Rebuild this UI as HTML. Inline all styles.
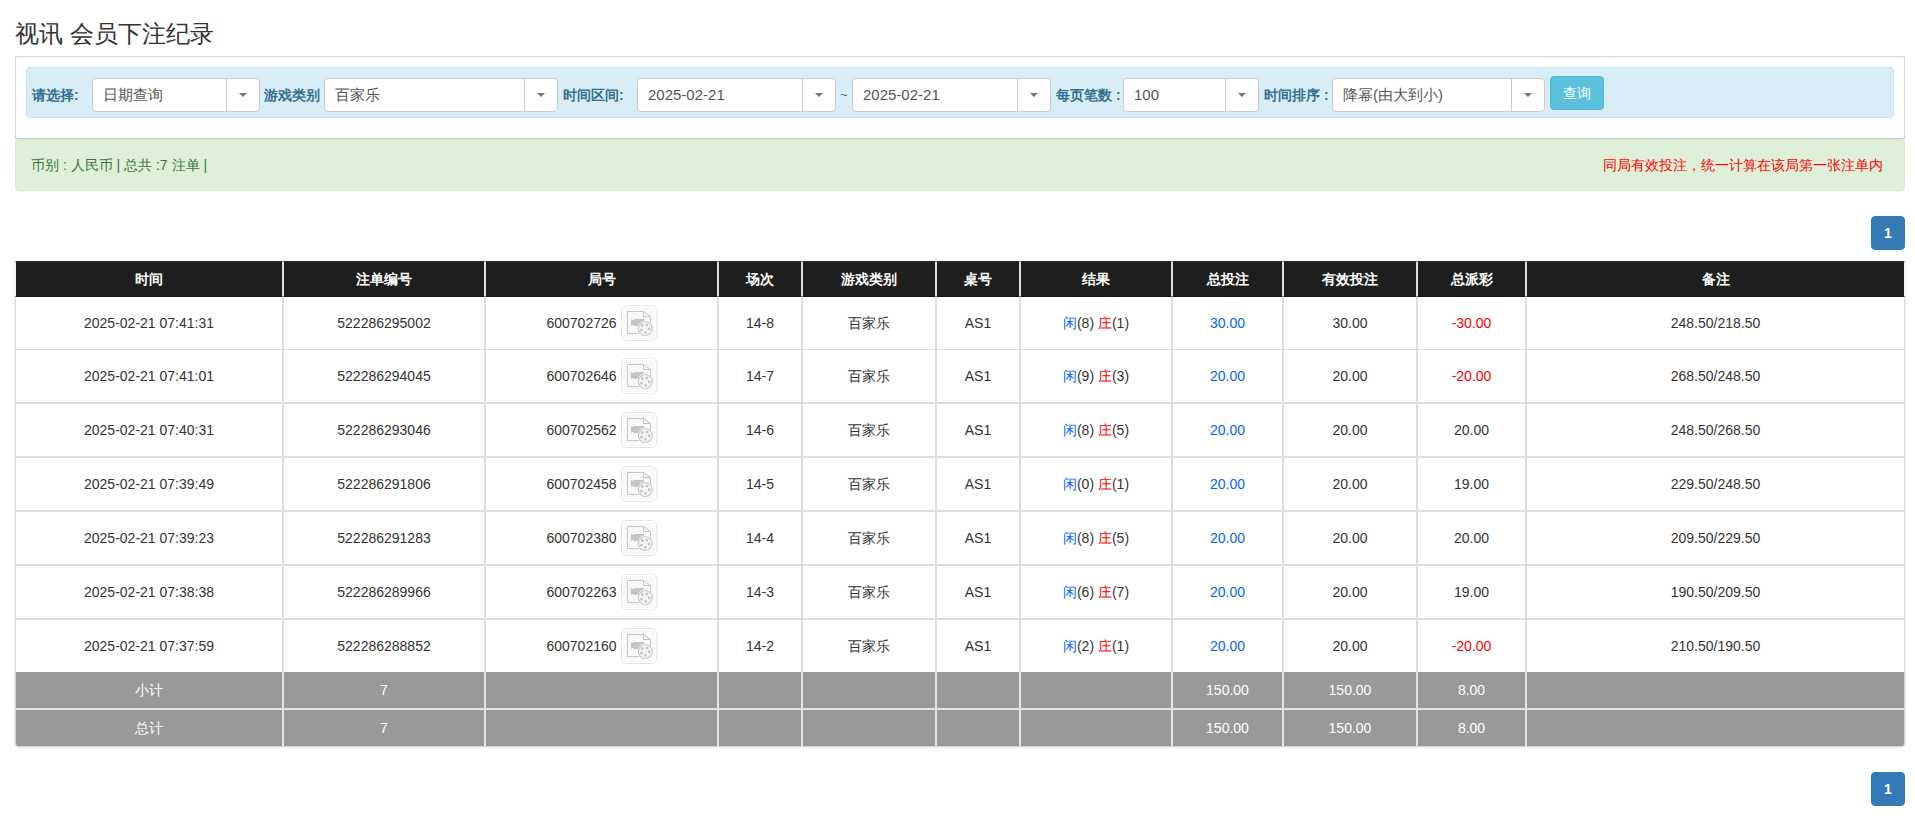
<!DOCTYPE html>
<html><head><meta charset="utf-8">
<style>
*{box-sizing:border-box;margin:0;padding:0}
html,body{width:1915px;height:821px;overflow:hidden;background:#fff}
body{font-family:"Liberation Sans",sans-serif;color:#333;font-size:14px;position:relative}
.abs{position:absolute}
h3{position:absolute;left:15px;top:18px;font-size:24px;font-weight:normal;line-height:32px;color:#333;white-space:nowrap}
.panel{position:absolute;left:15px;top:56px;width:1890px;height:83px;border:1px solid #d4d4d4;border-bottom-color:#ccc}
.info{position:absolute;left:26px;top:67px;width:1868px;height:51px;background:#d9edf7;border:1px solid #bce8f1;border-radius:4px}
.lbl{position:absolute;top:85px;font-size:14px;font-weight:bold;color:#31708f;line-height:20px;white-space:nowrap}
.sel{position:absolute;top:78px;height:34px;background:#fff;border:1px solid #ccc;border-radius:4px;font-size:15px;color:#555;line-height:32px;padding-left:10px;white-space:nowrap}
.sel .dv{position:absolute;top:0;bottom:0;right:32px;width:1px;background:#ccc}
.sel .ct{position:absolute;top:14px;right:12px;width:0;height:0;border-left:4px solid transparent;border-right:4px solid transparent;border-top:4px solid #777}
.btn{position:absolute;left:1550px;top:76px;width:54px;height:34px;background:#5bc0de;border:1px solid #46b8da;border-radius:4px;color:#fff;font-size:14px;line-height:32px;text-align:center}
.alert{position:absolute;left:15px;top:139px;width:1890px;height:52px;background:#dff0d8;border:1px solid #d6e9c6;border-radius:4px;color:#3c763d;font-size:14px}
.alert .l{position:absolute;left:15px;top:17px;line-height:16px;white-space:nowrap}
.alert .r{position:absolute;right:21px;top:17px;line-height:16px;color:#f00;white-space:nowrap}
.pg{position:absolute;left:1871px;width:34px;height:34px;background:#337ab7;border:1px solid #337ab7;border-radius:4px;color:#fff;font-size:14px;font-weight:bold;line-height:32px;text-align:center}
table{position:absolute;left:15px;top:261px;width:1890px;border-collapse:separate;border-spacing:0;table-layout:fixed}
th{height:36px;background:#1e1e1e;color:#fff;font-weight:bold;font-size:14px;border-left:1px solid #dedede;border-right:1px solid #dedede;border-top:1px solid #2a2a2a;border-bottom:1px solid #111;text-align:center;padding:0;line-height:20px}
th:first-child{border-left:1px solid #f2f2f2}
th:last-child{border-right:1px solid #f2f2f2}
td{text-align:center;font-size:14px;line-height:20px;border-left:1px solid #ddd;border-right:1px solid #ddd;border-bottom:1px solid #ddd;padding:0;height:54px;white-space:nowrap}
tbody tr:first-child td{height:53px}
tbody tr:last-child td{height:52px;border-bottom:0}
tbody tr:not(:first-child):not(:last-child) td{border-bottom-width:2px}
tfoot td{background:#999;color:#fff;height:36px;border-color:#e4e4e4;border-bottom:0}
tfoot tr:first-child td{height:38px;border-bottom:2px solid #e4e4e4}
tfoot td:first-child{border-left-color:#d0d0d0}
tfoot td:last-child{border-right-color:#d0d0d0}
tfoot tr:last-child td:first-child{border-bottom-left-radius:3px}
tfoot tr:last-child td:last-child{border-bottom-right-radius:3px}
table{box-shadow:0 1px 2px rgba(0,0,0,.22);border-radius:0 0 3px 3px}
.jn{position:relative;top:1px}
.b{color:#0066ff}
.rd{color:#f00}
.ico{display:inline-block;vertical-align:middle;width:36px;height:36px;border:1px solid #e6e6e6;border-radius:5px;background:#f8f8f8;box-shadow:inset 0 0 0 1px #fff;margin-left:4px;position:relative;top:0}
.ico svg{position:absolute;left:-1px;top:-1px}
</style></head><body>
<h3>视讯 会员下注纪录</h3>
<div class="panel"></div>
<div class="info"></div>
<div class="lbl" style="left:32px">请选择:</div>
<div class="sel" style="left:92px;width:168px">日期查询<span class="dv"></span><span class="ct"></span></div>
<div class="lbl" style="left:264px">游戏类别</div>
<div class="sel" style="left:324px;width:234px">百家乐<span class="dv"></span><span class="ct"></span></div>
<div class="lbl" style="left:563px">时间区间:</div>
<div class="sel" style="left:637px;width:199px">2025-02-21<span class="dv"></span><span class="ct"></span></div>
<div class="abs" style="left:840px;top:87px;color:#31708f;font-size:13px">~</div>
<div class="sel" style="left:852px;width:199px">2025-02-21<span class="dv"></span><span class="ct"></span></div>
<div class="lbl" style="left:1056px">每页笔数 :</div>
<div class="sel" style="left:1123px;width:136px">100<span class="dv"></span><span class="ct"></span></div>
<div class="lbl" style="left:1264px">时间排序 :</div>
<div class="sel" style="left:1332px;width:213px">降幂(由大到小)<span class="dv"></span><span class="ct"></span></div>
<div class="btn">查询</div>
<div class="alert"><span class="l">币别 : 人民币 | 总共 :7 注单 |</span><span class="r">同局有效投注，统一计算在该局第一张注单内</span></div>
<div class="pg" style="top:216px">1</div>
<table><colgroup><col style="width:268px"><col style="width:202px"><col style="width:233px"><col style="width:84px"><col style="width:134px"><col style="width:84px"><col style="width:152px"><col style="width:111px"><col style="width:134px"><col style="width:109px"><col style="width:379px"></colgroup>
<thead><tr><th>时间</th><th>注单编号</th><th>局号</th><th>场次</th><th>游戏类别</th><th>桌号</th><th>结果</th><th>总投注</th><th>有效投注</th><th>总派彩</th><th>备注</th></tr></thead><tbody>
<tr><td>2025-02-21 07:41:31</td><td>522286295002</td><td><span class="jn">600702726</span><span class="ico"><svg width="36" height="36" viewBox="0 0 36 36"><path d="M6.5 6.5H22.5L29.5 11.5V28.5H6.5Z" fill="none" stroke="#c6c6c6" stroke-width="1"/><path d="M22.5 6.5V11.5H29.5" fill="none" stroke="#c6c6c6" stroke-width="1"/><path d="M10 14L12 15.2L13.2 14H23V21H13.2L12 20L10 21Z" fill="#c4c4c4"/><circle cx="24.3" cy="23.6" r="8" fill="#fcfcfc"/><circle cx="24.3" cy="23.6" r="6.9" fill="#f8f8f8" stroke="#c4c4c4" stroke-width="1.1"/><g fill="#c6c6c6"><circle cx="21.3" cy="20.6" r="1.5"/><circle cx="25.9" cy="20" r="1.5"/><circle cx="28.1" cy="23.7" r="1.5"/><circle cx="24.5" cy="27.2" r="1.5"/><circle cx="20.5" cy="24.9" r="1.5"/><circle cx="24.1" cy="23.3" r="0.5"/></g></svg></span></td><td>14-8</td><td>百家乐</td><td>AS1</td><td><span class="b">闲</span>(8) <span class="rd">庄</span>(1)</td><td class="b">30.00</td><td>30.00</td><td class="rd">-30.00</td><td>248.50/218.50</td></tr>
<tr><td>2025-02-21 07:41:01</td><td>522286294045</td><td><span class="jn">600702646</span><span class="ico"><svg width="36" height="36" viewBox="0 0 36 36"><path d="M6.5 6.5H22.5L29.5 11.5V28.5H6.5Z" fill="none" stroke="#c6c6c6" stroke-width="1"/><path d="M22.5 6.5V11.5H29.5" fill="none" stroke="#c6c6c6" stroke-width="1"/><path d="M10 14L12 15.2L13.2 14H23V21H13.2L12 20L10 21Z" fill="#c4c4c4"/><circle cx="24.3" cy="23.6" r="8" fill="#fcfcfc"/><circle cx="24.3" cy="23.6" r="6.9" fill="#f8f8f8" stroke="#c4c4c4" stroke-width="1.1"/><g fill="#c6c6c6"><circle cx="21.3" cy="20.6" r="1.5"/><circle cx="25.9" cy="20" r="1.5"/><circle cx="28.1" cy="23.7" r="1.5"/><circle cx="24.5" cy="27.2" r="1.5"/><circle cx="20.5" cy="24.9" r="1.5"/><circle cx="24.1" cy="23.3" r="0.5"/></g></svg></span></td><td>14-7</td><td>百家乐</td><td>AS1</td><td><span class="b">闲</span>(9) <span class="rd">庄</span>(3)</td><td class="b">20.00</td><td>20.00</td><td class="rd">-20.00</td><td>268.50/248.50</td></tr>
<tr><td>2025-02-21 07:40:31</td><td>522286293046</td><td><span class="jn">600702562</span><span class="ico"><svg width="36" height="36" viewBox="0 0 36 36"><path d="M6.5 6.5H22.5L29.5 11.5V28.5H6.5Z" fill="none" stroke="#c6c6c6" stroke-width="1"/><path d="M22.5 6.5V11.5H29.5" fill="none" stroke="#c6c6c6" stroke-width="1"/><path d="M10 14L12 15.2L13.2 14H23V21H13.2L12 20L10 21Z" fill="#c4c4c4"/><circle cx="24.3" cy="23.6" r="8" fill="#fcfcfc"/><circle cx="24.3" cy="23.6" r="6.9" fill="#f8f8f8" stroke="#c4c4c4" stroke-width="1.1"/><g fill="#c6c6c6"><circle cx="21.3" cy="20.6" r="1.5"/><circle cx="25.9" cy="20" r="1.5"/><circle cx="28.1" cy="23.7" r="1.5"/><circle cx="24.5" cy="27.2" r="1.5"/><circle cx="20.5" cy="24.9" r="1.5"/><circle cx="24.1" cy="23.3" r="0.5"/></g></svg></span></td><td>14-6</td><td>百家乐</td><td>AS1</td><td><span class="b">闲</span>(8) <span class="rd">庄</span>(5)</td><td class="b">20.00</td><td>20.00</td><td>20.00</td><td>248.50/268.50</td></tr>
<tr><td>2025-02-21 07:39:49</td><td>522286291806</td><td><span class="jn">600702458</span><span class="ico"><svg width="36" height="36" viewBox="0 0 36 36"><path d="M6.5 6.5H22.5L29.5 11.5V28.5H6.5Z" fill="none" stroke="#c6c6c6" stroke-width="1"/><path d="M22.5 6.5V11.5H29.5" fill="none" stroke="#c6c6c6" stroke-width="1"/><path d="M10 14L12 15.2L13.2 14H23V21H13.2L12 20L10 21Z" fill="#c4c4c4"/><circle cx="24.3" cy="23.6" r="8" fill="#fcfcfc"/><circle cx="24.3" cy="23.6" r="6.9" fill="#f8f8f8" stroke="#c4c4c4" stroke-width="1.1"/><g fill="#c6c6c6"><circle cx="21.3" cy="20.6" r="1.5"/><circle cx="25.9" cy="20" r="1.5"/><circle cx="28.1" cy="23.7" r="1.5"/><circle cx="24.5" cy="27.2" r="1.5"/><circle cx="20.5" cy="24.9" r="1.5"/><circle cx="24.1" cy="23.3" r="0.5"/></g></svg></span></td><td>14-5</td><td>百家乐</td><td>AS1</td><td><span class="b">闲</span>(0) <span class="rd">庄</span>(1)</td><td class="b">20.00</td><td>20.00</td><td>19.00</td><td>229.50/248.50</td></tr>
<tr><td>2025-02-21 07:39:23</td><td>522286291283</td><td><span class="jn">600702380</span><span class="ico"><svg width="36" height="36" viewBox="0 0 36 36"><path d="M6.5 6.5H22.5L29.5 11.5V28.5H6.5Z" fill="none" stroke="#c6c6c6" stroke-width="1"/><path d="M22.5 6.5V11.5H29.5" fill="none" stroke="#c6c6c6" stroke-width="1"/><path d="M10 14L12 15.2L13.2 14H23V21H13.2L12 20L10 21Z" fill="#c4c4c4"/><circle cx="24.3" cy="23.6" r="8" fill="#fcfcfc"/><circle cx="24.3" cy="23.6" r="6.9" fill="#f8f8f8" stroke="#c4c4c4" stroke-width="1.1"/><g fill="#c6c6c6"><circle cx="21.3" cy="20.6" r="1.5"/><circle cx="25.9" cy="20" r="1.5"/><circle cx="28.1" cy="23.7" r="1.5"/><circle cx="24.5" cy="27.2" r="1.5"/><circle cx="20.5" cy="24.9" r="1.5"/><circle cx="24.1" cy="23.3" r="0.5"/></g></svg></span></td><td>14-4</td><td>百家乐</td><td>AS1</td><td><span class="b">闲</span>(8) <span class="rd">庄</span>(5)</td><td class="b">20.00</td><td>20.00</td><td>20.00</td><td>209.50/229.50</td></tr>
<tr><td>2025-02-21 07:38:38</td><td>522286289966</td><td><span class="jn">600702263</span><span class="ico"><svg width="36" height="36" viewBox="0 0 36 36"><path d="M6.5 6.5H22.5L29.5 11.5V28.5H6.5Z" fill="none" stroke="#c6c6c6" stroke-width="1"/><path d="M22.5 6.5V11.5H29.5" fill="none" stroke="#c6c6c6" stroke-width="1"/><path d="M10 14L12 15.2L13.2 14H23V21H13.2L12 20L10 21Z" fill="#c4c4c4"/><circle cx="24.3" cy="23.6" r="8" fill="#fcfcfc"/><circle cx="24.3" cy="23.6" r="6.9" fill="#f8f8f8" stroke="#c4c4c4" stroke-width="1.1"/><g fill="#c6c6c6"><circle cx="21.3" cy="20.6" r="1.5"/><circle cx="25.9" cy="20" r="1.5"/><circle cx="28.1" cy="23.7" r="1.5"/><circle cx="24.5" cy="27.2" r="1.5"/><circle cx="20.5" cy="24.9" r="1.5"/><circle cx="24.1" cy="23.3" r="0.5"/></g></svg></span></td><td>14-3</td><td>百家乐</td><td>AS1</td><td><span class="b">闲</span>(6) <span class="rd">庄</span>(7)</td><td class="b">20.00</td><td>20.00</td><td>19.00</td><td>190.50/209.50</td></tr>
<tr><td>2025-02-21 07:37:59</td><td>522286288852</td><td><span class="jn">600702160</span><span class="ico"><svg width="36" height="36" viewBox="0 0 36 36"><path d="M6.5 6.5H22.5L29.5 11.5V28.5H6.5Z" fill="none" stroke="#c6c6c6" stroke-width="1"/><path d="M22.5 6.5V11.5H29.5" fill="none" stroke="#c6c6c6" stroke-width="1"/><path d="M10 14L12 15.2L13.2 14H23V21H13.2L12 20L10 21Z" fill="#c4c4c4"/><circle cx="24.3" cy="23.6" r="8" fill="#fcfcfc"/><circle cx="24.3" cy="23.6" r="6.9" fill="#f8f8f8" stroke="#c4c4c4" stroke-width="1.1"/><g fill="#c6c6c6"><circle cx="21.3" cy="20.6" r="1.5"/><circle cx="25.9" cy="20" r="1.5"/><circle cx="28.1" cy="23.7" r="1.5"/><circle cx="24.5" cy="27.2" r="1.5"/><circle cx="20.5" cy="24.9" r="1.5"/><circle cx="24.1" cy="23.3" r="0.5"/></g></svg></span></td><td>14-2</td><td>百家乐</td><td>AS1</td><td><span class="b">闲</span>(2) <span class="rd">庄</span>(1)</td><td class="b">20.00</td><td>20.00</td><td class="rd">-20.00</td><td>210.50/190.50</td></tr>
</tbody><tfoot>
<tr><td>小计</td><td>7</td><td></td><td></td><td></td><td></td><td></td><td>150.00</td><td>150.00</td><td>8.00</td><td></td></tr>
<tr><td>总计</td><td>7</td><td></td><td></td><td></td><td></td><td></td><td>150.00</td><td>150.00</td><td>8.00</td><td></td></tr>
</tfoot></table>
<div class="pg" style="top:772px">1</div>
</body></html>
